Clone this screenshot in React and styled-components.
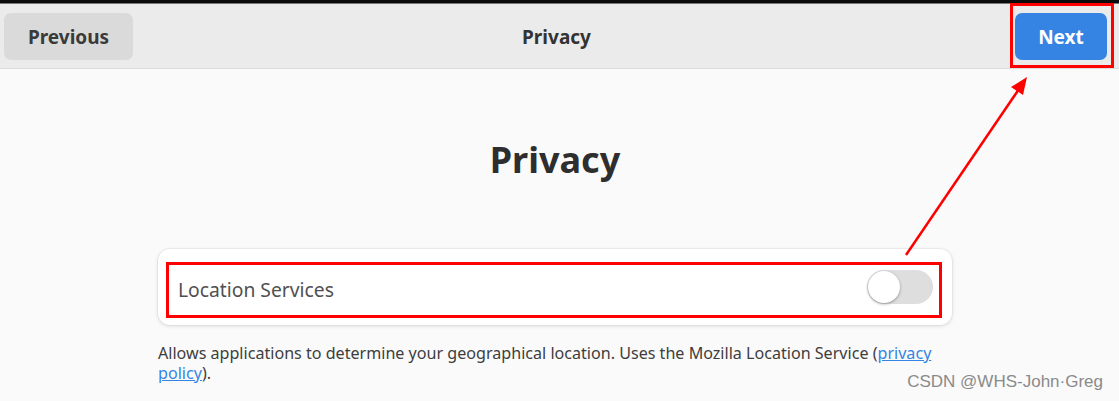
import React from "react";
import styled, { createGlobalStyle } from "styled-components";

const Global = createGlobalStyle`
  html, body { margin: 0; padding: 0; background: #fafafa; }
  body { font-family: "Noto Sans", "Open Sans", sans-serif; color: #2e2e2e; }
  * { box-sizing: border-box; }
`;

const Page = styled.div`
  position: relative;
  width: 1119px;
  height: 401px;
  overflow: hidden;
  background: #fafafa;
  display: flex;
  flex-direction: column;
`;

const TopEdge = styled.div`
  height: 4px;
  background: #0a0a0a;
  border-bottom: 1px solid #777;
`;

const HeaderBar = styled.header`
  display: grid;
  grid-template-columns: 1fr auto 1fr;
  align-items: center;
  height: 65px;
  background: #ebebeb;
  border-bottom: 1px solid #dcdcdc;
`;

const Left = styled.div`
  padding-left: 4px;
  display: flex;
  align-items: center;
`;

const Right = styled.div`
  justify-self: end;
  align-self: stretch;
  display: flex;
  margin-right: 5px;
  margin-top: -1px;
`;

const Button = styled.button`
  border: none;
  height: 47px;
  width: ${(p) => p.$w}px;
  border-radius: 7px;
  font-family: "Noto Sans", sans-serif;
  font-weight: 700;
  font-size: 19px;
  padding: 0;
  line-height: 49px;
  background: ${(p) => (p.$primary ? "#3584e4" : "#dadada")};
  color: ${(p) => (p.$primary ? "#ffffff" : "#3a3a3a")};
`;

const Mark = styled.div`
  border: 3px solid #ff0000;
  display: flex;
  align-items: center;
  padding: ${(p) => p.$pad};
`;

const HeaderTitle = styled.div`
  font-weight: 700;
  font-size: 19px;
  color: #333;
  padding-right: 6px;
  padding-top: 2px;
`;

const Main = styled.main`
  display: flex;
  flex-direction: column;
  padding-left: 158px;
`;

const Heading = styled.h1`
  margin: 69px 0 0;
  width: 794px;
  text-align: center;
  font-size: 36px;
  line-height: 44px;
  font-weight: 700;
  color: #2e2e2e;
`;

const Card = styled.div`
  margin-top: 67px;
  width: 794px;
  height: 76px;
  background: #ffffff;
  border-radius: 12px;
  box-shadow: 0 0 0 1px rgba(0, 0, 0, 0.04), 0 1px 4px rgba(0, 0, 0, 0.12);
  padding: 13px 10px 7px 8px;
  display: flex;
`;

const Row = styled(Mark)`
  flex: 1;
  justify-content: space-between;
`;

const Label = styled.span`
  font-size: 19.3px;
  color: #505050;
  margin-top: -2px;
`;

const Track = styled.div`
  position: relative;
  width: 66px;
  height: 34px;
  border-radius: 17px;
  background: #dedede;
  margin-top: -6px;
`;

const Knob = styled.div`
  position: absolute;
  left: 1px;
  top: 1px;
  width: 32px;
  height: 32px;
  border-radius: 50%;
  background: #ffffff;
  box-shadow: 0 1px 3px rgba(0, 0, 0, 0.35);
`;

const Description = styled.p`
  margin: 18px 0 0;
  width: 794px;
  font-size: 16.1px;
  line-height: 20px;
  color: #3d3d3d;
`;

const Link = styled.a`
  color: #3584e4;
  text-decoration: underline;
`;

const Watermark = styled.div`
  position: absolute;
  right: 16px;
  bottom: 9px;
  font-family: "Liberation Sans", Arial, sans-serif;
  font-size: 17px;
  color: #8a8a8a;
`;

const Overlay = styled.svg`
  position: absolute;
  left: 0;
  top: 0;
  pointer-events: none;
`;

export default function App() {
  return (
    <>
      <Global />
      <Page>
        <TopEdge />
        <HeaderBar>
          <Left>
            <Button $w={129}>Previous</Button>
          </Left>
          <HeaderTitle>Privacy</HeaderTitle>
          <Right>
            <Mark $pad="2px 4px 0 2px">
              <Button $primary $w={92}>Next</Button>
            </Mark>
          </Right>
        </HeaderBar>
        <Main>
          <Heading>Privacy</Heading>
          <Card>
            <Row $pad="0 6px 0 9px">
              <Label>Location Services</Label>
              <Track>
                <Knob />
              </Track>
            </Row>
          </Card>
          <Description>
            Allows applications to determine your geographical location. Uses the Mozilla Location Service (
            <Link href="#">privacy policy</Link>).
          </Description>
        </Main>
        <Watermark>CSDN @WHS-John·Greg</Watermark>
        <Overlay width="1119" height="401" viewBox="0 0 1119 401">
          <line x1="906" y1="255" x2="1019" y2="89" stroke="#ff0000" strokeWidth="2.5" />
          <polygon points="1027,77 1023,95 1011,87" fill="#ff0000" />
        </Overlay>
      </Page>
    </>
  );
}
